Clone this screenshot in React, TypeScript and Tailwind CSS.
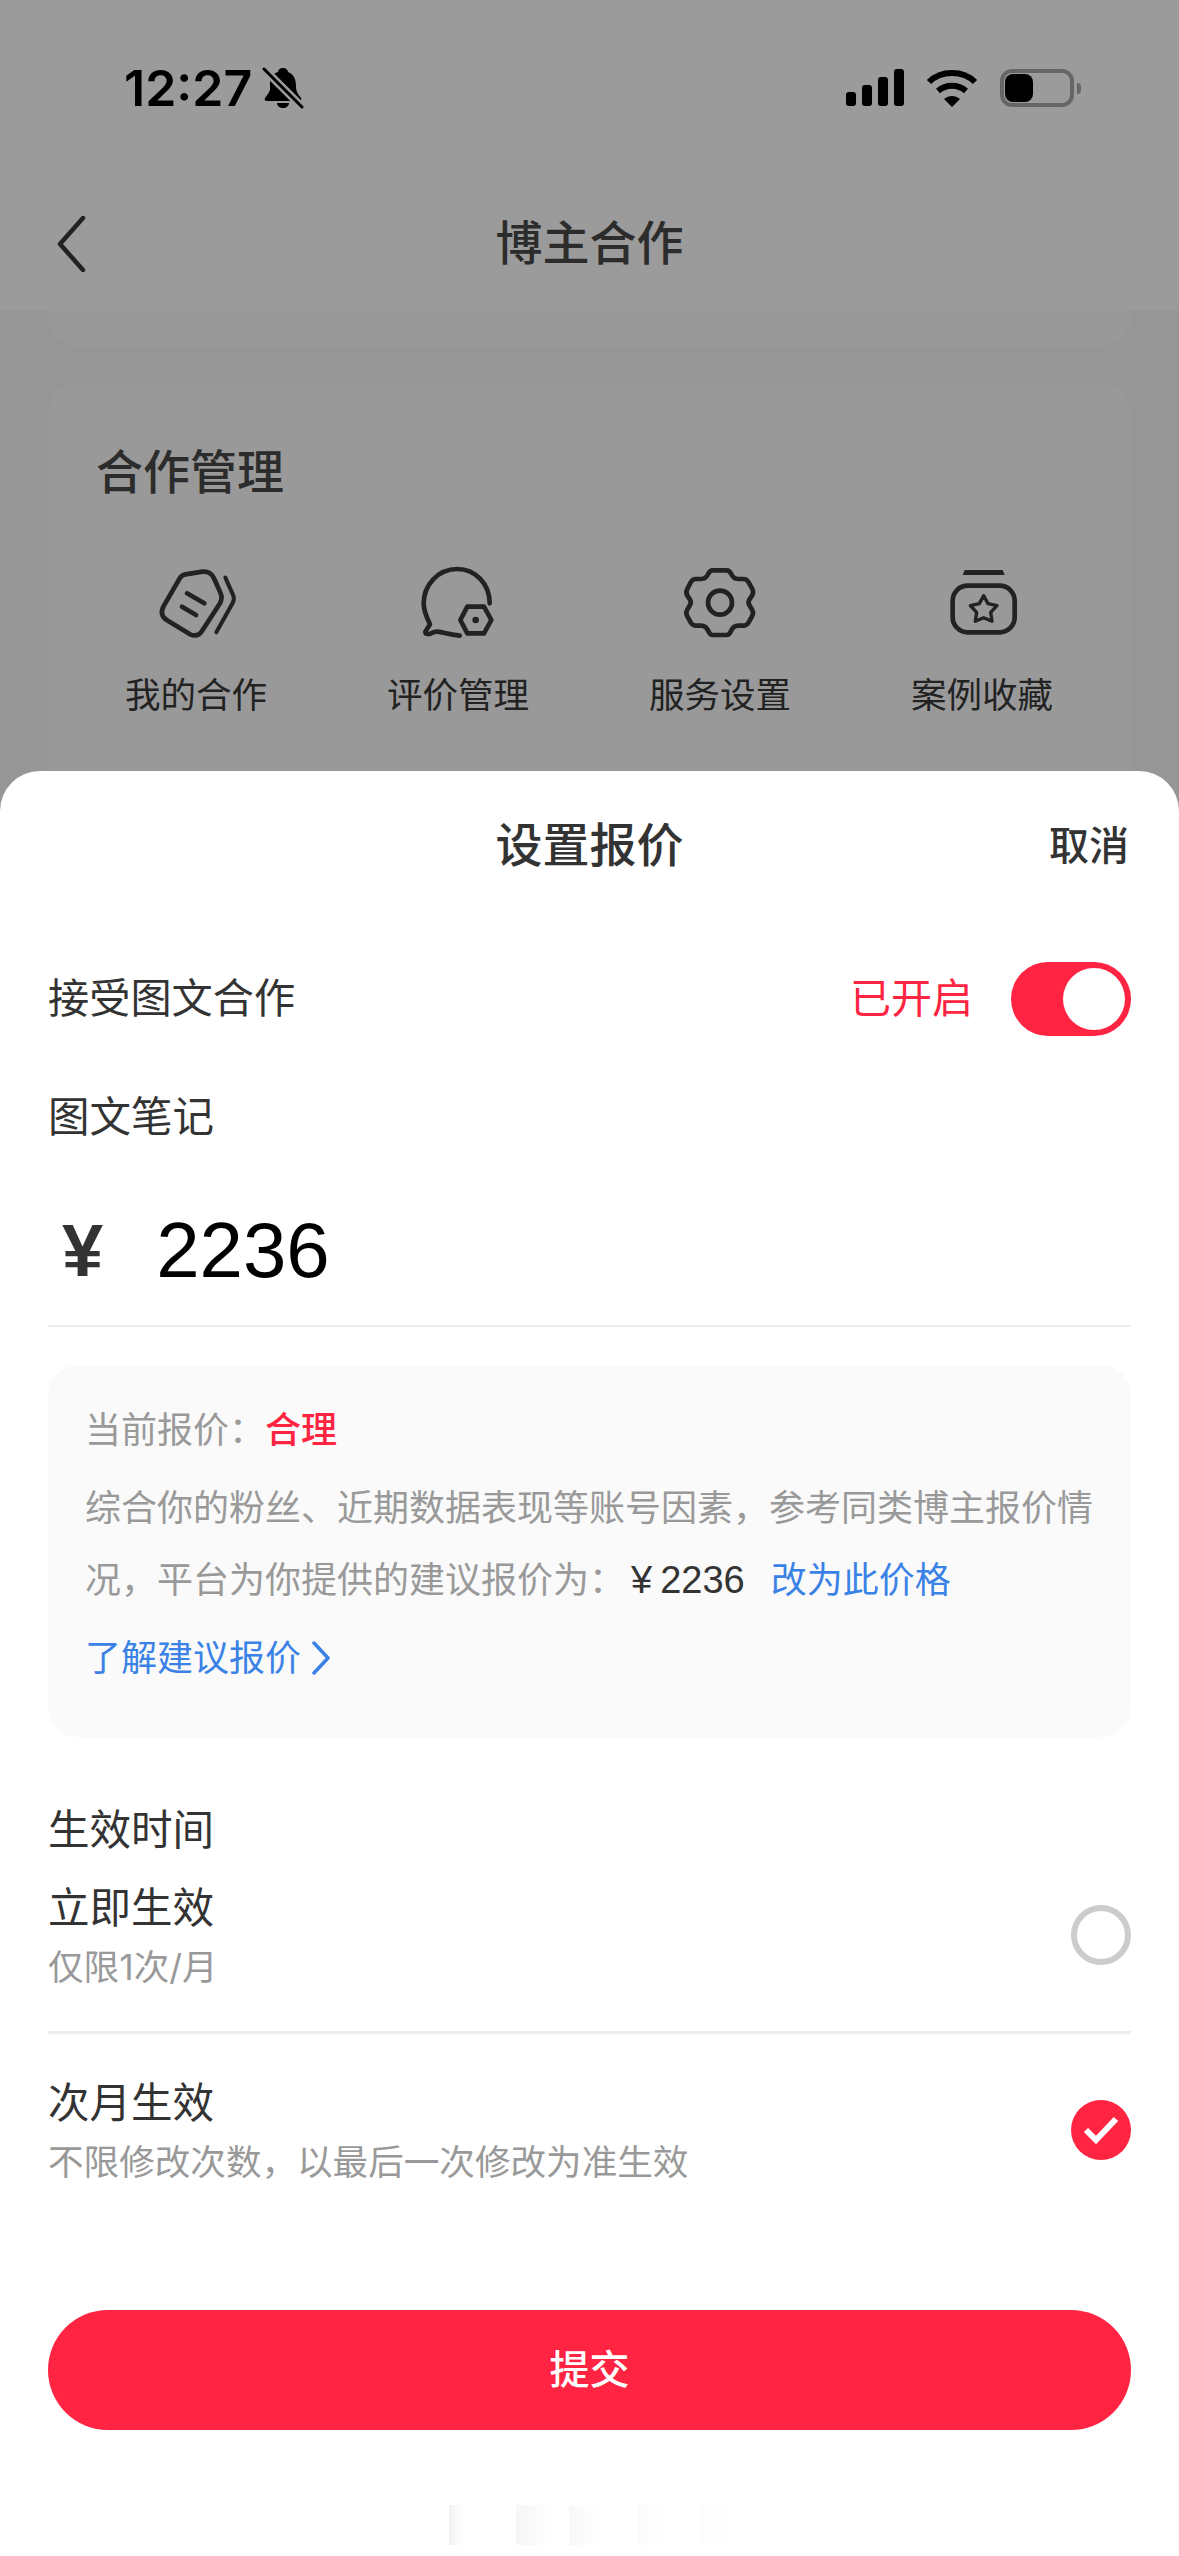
const cjk = "font-['Inter','Noto_Sans_CJK_SC',sans-serif]";

function BellOff() {
  return (
    <svg width="42" height="42" viewBox="0 0 42 42" className="ml-[10px]">
      <path d="M21 1c3 0 5 2 5 4 6 2 8 8 8 14 0 6 2 8 5 12 1 2 0 3-2 3H5c-2 0-3-1-2-3 2-3 4-5 5-8V15C9 9 12 6 16 5c0-2 2-4 5-4z" fill="#000" />
      <path d="M15 36h12c0 3-3 5-6 5s-6-2-6-5z" fill="#000" />
      <path d="M2 2l38 38" stroke="#9b9b9b" strokeWidth="8" />
      <path d="M2 2l38 38" stroke="#000" strokeWidth="3" strokeLinecap="round" />
    </svg>
  );
}

function Signal() {
  return (
    <svg width="58" height="38" viewBox="0 0 58 38">
      <rect x="0" y="23" width="10" height="14" rx="3" fill="#000" />
      <rect x="16" y="16" width="10" height="21" rx="3" fill="#000" />
      <rect x="32" y="8" width="10" height="29" rx="3" fill="#000" />
      <rect x="48" y="0" width="10" height="37" rx="3" fill="#000" />
    </svg>
  );
}

function Wifi() {
  return (
    <svg width="52" height="38" viewBox="0 0 52 38">
      <path d="M3 13C15 1 37 1 49 13" stroke="#000" strokeWidth="6" fill="none" />
      <path d="M12 22c8-7 20-7 28 0" stroke="#000" strokeWidth="6" fill="none" />
      <path d="M18 30c5-4 11-4 16 0l-8 8z" fill="#000" />
    </svg>
  );
}

function Battery() {
  return (
    <div className="flex items-center">
      <div className="flex h-[38px] w-[74px] items-center rounded-[12px] border-[4px] border-[#666] pl-[1px]">
        <div className="h-[28px] w-[28px] rounded-[8px] bg-black" />
      </div>
      <div className="ml-[3px] h-[11px] w-[4px] rounded-r-full bg-[#666]" />
    </div>
  );
}

function DealIcon() {
  return (
    <svg width="100" height="95" viewBox="0 0 300 285" fill="none" stroke="#222" strokeWidth="14" strokeLinecap="round" strokeLinejoin="round">
      <path d="M118 58L170 50Q195 48 205 72L224 115Q230 130 222 145L168 228Q155 248 132 238L62 195Q40 180 52 155L100 72Q106 60 118 58Z" />
      <path d="M123 115L175 145M108 155L150 180" />
      <path d="M238 68L262 122Q266 132 260 144L211 232" strokeWidth="12" />
    </svg>
  );
}

function ReviewIcon() {
  return (
    <svg width="100" height="95" viewBox="0 0 300 285" fill="none" stroke="#222" strokeWidth="14" strokeLinecap="round" strokeLinejoin="round">
      <path d="M245 145C245 85 200 42 148 42C90 42 47 90 47 145C47 170 57 190 66 208L52 230Q52 240 68 236C85 222 100 235 155 242" />
      <path d="M178 155H228L250 195L228 235H178L157 195Z" />
      <circle cx="203" cy="195" r="10" fill="#222" stroke="none" />
    </svg>
  );
}

function GearIcon() {
  return (
    <svg width="100" height="95" viewBox="0 0 300 285" fill="none" stroke="#222" strokeWidth="14" strokeLinejoin="round">
      <path d="M128 46H170Q178 46 183 56Q190 72 205 72H220Q230 72 236 82L247 102Q252 112 246 122L238 134Q233 142 238 150L246 164Q252 174 246 184L236 202Q230 212 220 212H205Q190 212 183 228Q178 240 170 240H128Q120 240 115 228Q108 212 93 212H78Q68 212 62 202L52 184Q46 174 52 164L60 150Q65 142 60 134L52 122Q46 112 52 102L62 82Q68 72 78 72H93Q108 72 115 56Q120 46 128 46Z" />
      <circle cx="150" cy="143" r="36" />
    </svg>
  );
}

function CaseIcon() {
  return (
    <svg width="100" height="95" viewBox="0 0 300 285" fill="none" stroke="#222" strokeWidth="14" strokeLinejoin="round">
      <path d="M98 45H212L218 60H92Z" fill="#222" stroke="none" />
      <rect x="62" y="92" width="186" height="140" rx="45" />
      <path d="M155 122L168 146L195 152L176 172L180 199L155 188L130 199L134 172L115 152L142 146Z" strokeWidth="10" />
    </svg>
  );
}

function Entry({ icon, label }: { icon: React.ReactNode; label: string }) {
  return (
    <div className="flex w-[262px] flex-col items-center">
      {icon}
      <span className="mt-[26px] text-[35.5px] leading-[40px] text-[#222]">{label}</span>
    </div>
  );
}

function Option({ title, sub, checked }: { title: string; sub: string; checked?: boolean }) {
  return (
    <div className="flex h-[138px] items-center justify-between">
      <div className="mt-[6px]">
        <div className="flex h-[60px] items-center text-[41.5px] text-[#333]">{title}</div>
        <div className="flex h-[60px] items-center text-[35.6px] text-[#999]">{sub}</div>
      </div>
      {checked ? (
        <div className="flex h-[60px] w-[60px] items-center justify-center rounded-full bg-[#ff2442]">
          <svg width="38" height="30" viewBox="0 0 38 30" fill="none">
            <path d="M4 15L14 25L34 4" stroke="#fff" strokeWidth="6" />
          </svg>
        </div>
      ) : (
        <div className="h-[60px] w-[60px] rounded-full border-[6px] border-[#ccc]" />
      )}
    </div>
  );
}

export default function App() {
  return (
    <div className={`flex h-[2556px] w-[1179px] flex-col overflow-hidden bg-[#969696] ${cjk}`}>
      {/* Dimmed page behind the sheet */}
      <div className="h-[771px] flex-shrink-0">
        <header className="h-[310px] bg-[#9b9b9b]">
          <div className="flex h-[176px] justify-between pl-[124px] pr-[98px] pt-[64px]">
            <div className="flex h-[48px] items-center">
              <span className="text-[50px] leading-[48px] font-semibold text-black">12:27</span>
              <BellOff />
            </div>
            <div className="flex h-[48px] items-center gap-[22px]">
              <Signal />
              <Wifi />
              <Battery />
            </div>
          </div>
          <div className="relative flex h-[134px] items-center justify-center">
            <svg width="30" height="56" viewBox="0 0 30 56" fill="none" className="absolute left-[56px] top-[40px]">
              <path d="M27 2L4 28L27 54" stroke="#222" strokeWidth="4.5" strokeLinecap="round" strokeLinejoin="round" />
            </svg>
            <span className="text-[47px] leading-[60px] font-medium text-[#2c2c2c]">博主合作</span>
          </div>
        </header>
        <div className="mx-[48px] h-[36px] rounded-b-[30px] bg-[#999]" />
        <div className="mx-[48px] mt-[37px] h-[388px] rounded-t-[30px] bg-[#999]">
          <div className="flex h-[172px] items-center pl-[48px] pt-[7px] text-[47px] font-medium text-[#2c2c2c]">合作管理</div>
          <div className="flex pl-[17px]">
            <Entry icon={<DealIcon />} label="我的合作" />
            <Entry icon={<ReviewIcon />} label="评价管理" />
            <Entry icon={<GearIcon />} label="服务设置" />
            <Entry icon={<CaseIcon />} label="案例收藏" />
          </div>
        </div>
      </div>

      {/* Bottom sheet */}
      <div className="flex-1 rounded-t-[40px] bg-white px-[48px]">
        <div className="grid h-[148px] grid-cols-[1fr_auto_1fr] items-center">
          <div />
          <span className="text-[47px] font-medium text-[#333]">设置报价</span>
          <span className="justify-self-end pr-[2px] pt-[2px] text-[40px] font-medium text-[#333]">取消</span>
        </div>
        <div className="flex h-[160px] items-center justify-between">
          <span className="text-[41.2px] text-[#333]">接受图文合作</span>
          <div className="flex items-center gap-[38px]">
            <span className="text-[41px] text-[#ff2442]">已开启</span>
            <div className="flex h-[74px] w-[120px] items-center justify-end rounded-full bg-[#ff2442] pr-[6px]">
              <div className="h-[62px] w-[62px] rounded-full bg-white" />
            </div>
          </div>
        </div>
        <div className="flex h-[76px] items-center text-[41.5px] text-[#333]">图文笔记</div>
        <div className="mt-[20px] flex h-[152px] items-center border-b-[2px] border-[#eee] pl-[14px]">
          <span className="font-['Liberation_Sans',sans-serif] text-[74px] font-bold text-[#333]">¥</span>
          <span className="ml-[53px] font-['Liberation_Sans',sans-serif] text-[78px] text-black">2236</span>
        </div>

        <div className="mt-[38px] h-[372px] rounded-[30px] bg-[#fafafa] px-[37px] pt-[29px] text-[36px] text-[#999]">
          <div className="flex h-[72px] items-center">
            当前报价：<span className="font-medium text-[#ff2442]">合理</span>
          </div>
          <div className="mt-[6px] text-[36px] leading-[72px]">
            <div className="whitespace-nowrap">综合你的粉丝、近期数据表现等账号因素，参考同类博主报价情</div>
            <div className="flex items-center whitespace-nowrap">
              况，平台为你提供的建议报价为：
              <span className="ml-[6px] font-['Liberation_Sans',sans-serif] text-[38px] text-[#333]">¥</span>
              <span className="ml-[8px] font-['Liberation_Sans',sans-serif] text-[38px] text-[#333]">2236</span>
              <span className="ml-[26px] text-[#3b82e6]">改为此价格</span>
            </div>
          </div>
          <div className="mt-[6px] flex h-[72px] items-center text-[#3b82e6]">
            了解建议报价
            <svg width="20" height="34" viewBox="0 0 20 34" fill="none" className="ml-[10px]">
              <path d="M3 2L17 17L3 32" stroke="#3b82e6" strokeWidth="3.5" strokeLinecap="round" strokeLinejoin="round" />
            </svg>
          </div>
        </div>

        <div className="mt-[57px] flex h-[72px] items-center text-[41.5px] text-[#333]">生效时间</div>
        <Option title="立即生效" sub="仅限1次/月" />
        <div className="mt-[27px] h-[3px] bg-[#eee]" />
        <div className="mt-[27px]">
          <Option title="次月生效" sub="不限修改次数，以最后一次修改为准生效" checked />
        </div>

        <button className="mt-[111px] flex h-[120px] w-full items-center justify-center rounded-full bg-[#ff2442] text-[40px] font-medium text-white">
          提交
        </button>

        {/* Faint ghost of the home indicator */}
        <div className="mt-[75px] flex h-[40px] justify-center">
          <div className="h-full w-[15px] bg-gradient-to-r from-[#f2f2f2] to-white" />
          <div className="ml-[52px] h-full w-[38px] bg-gradient-to-r from-[#f6f6f6] to-white" />
          <div className="ml-[15px] h-full w-[30px] bg-gradient-to-r from-[#f8f8f8] to-white" />
          <div className="ml-[38px] h-full w-[26px] bg-gradient-to-r from-[#fafafa] to-white" />
          <div className="ml-[38px] h-full w-[30px] bg-gradient-to-r from-[#fcfcfc] to-white" />
        </div>
      </div>
    </div>
  );
}
